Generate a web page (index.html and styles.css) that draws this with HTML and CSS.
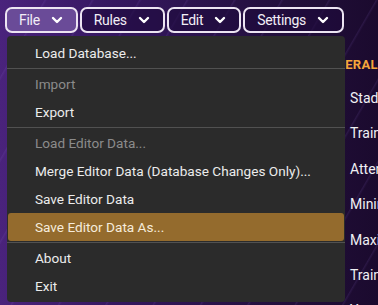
FILE: index.html
```html
<!DOCTYPE html>
<html lang="en">
<head>
    <meta charset="UTF-8">
    <meta name="viewport" content="width=device-width, initial-scale=1.0">
    <title>Editor</title>
    <link rel="stylesheet" href="styles.css">
</head>
<body>

    <div class="page">
        <!-- Barra de menus -->
        <div class="topbar">
            <button class="menu-btn active">File <svg class="chev" viewBox="0 0 10 6"><polyline points="1,1 5,5 9,1"/></svg></button>
            <button class="menu-btn">Rules <svg class="chev" viewBox="0 0 10 6"><polyline points="1,1 5,5 9,1"/></svg></button>
            <button class="menu-btn">Edit <svg class="chev" viewBox="0 0 10 6"><polyline points="1,1 5,5 9,1"/></svg></button>
            <button class="menu-btn">Settings <svg class="chev" viewBox="0 0 10 6"><polyline points="1,1 5,5 9,1"/></svg></button>
        </div>

        <!-- Panel detras del menu -->
        <div class="panel">
            <div class="panel-title">GENERAL</div>
            <div class="panel-row">Stadium Capacity</div>
            <div class="panel-row">Training Facilities</div>
            <div class="panel-row">Attendance</div>
            <div class="panel-row">Minimum Wage</div>
            <div class="panel-row">Maximum Wage</div>
            <div class="panel-row">Training Budget</div>
            <div class="panel-row">Youth Facilities</div>
        </div>

        <!-- Desplegable File -->
        <div class="dropdown">
            <div class="item">Load Database...</div>
            <div class="sep"></div>
            <div class="item disabled">Import</div>
            <div class="item">Export</div>
            <div class="sep"></div>
            <div class="item disabled">Load Editor Data...</div>
            <div class="item">Merge Editor Data (Database Changes Only)...</div>
            <div class="item">Save Editor Data</div>
            <div class="item hover">Save Editor Data As...</div>
            <div class="sep"></div>
            <div class="item">About</div>
            <div class="item">Exit</div>
        </div>
    </div>

</body>
</html>
```

FILE: styles.css
```css
body {
    margin: 0;
    font-family: Roboto, "Noto Sans", sans-serif;
    color: #ececec;
}

.page {
    position: relative;
    width: 378px;
    height: 305px;
    overflow: hidden;
    background:
        repeating-linear-gradient(120deg, rgba(255,255,255,0) 0px, rgba(255,255,255,0) 38px, rgba(150,110,220,0.12) 39px, rgba(255,255,255,0) 41px),
        linear-gradient(90deg, #4a237c 0%, #351760 30%, #24103f 70%, #1b0a2e 100%);
}

.topbar {
    display: flex;
    gap: 2px;
    padding: 7px 0 0 5px;
}

.menu-btn {
    display: flex;
    align-items: center;
    gap: 12px;
    box-sizing: border-box;
    height: 26px;
    margin: 0;
    padding: 0 14px 0 12px;
    border: 2px solid #ece4f2;
    border-radius: 7px;
    background: rgba(30, 10, 60, 0.6);
    color: #f2eef6;
    font-family: Roboto, "Noto Sans", sans-serif;
    font-size: 14px;
    letter-spacing: -0.3px;
}

.menu-btn.active {
    background: #6a4b98;
}

.chev {
    flex: none;
    width: 10px;
    height: 6px;
    fill: none;
    stroke: #ffffff;
    stroke-width: 2.4;
    stroke-linecap: round;
    stroke-linejoin: round;
    overflow: visible;
}

.panel {
    margin: 23px 0 0 319px;
    white-space: nowrap;
    font-size: 14px;
}

.panel-title {
    height: 18px;
    line-height: 18px;
    margin-bottom: 7px;
    font-size: 13px;
    font-weight: bold;
    color: #f5a53b;
    letter-spacing: 0.3px;
}

.panel-row {
    height: 35.4px;
    line-height: 35px;
    padding-left: 31px;
    color: #f0f0f4;
}

.dropdown {
    position: absolute;
    left: 7px;
    top: 36px;
    width: 338px;
    height: 266px;
    box-sizing: border-box;
    padding: 3px 1px 2px 1px;
    background: #2b2b2b;
    border-radius: 4px;
}

.item {
    height: 28px;
    line-height: 28px;
    padding-left: 27px;
    font-size: 13.6px;
    color: #ececec;
    border-radius: 3px;
}

.item.disabled {
    color: #8b8b8b;
}

.item.hover {
    background: #946b2d;
    color: #f6ecdc;
}

.sep {
    height: 1px;
    margin: 1px -1px;
    background: #515151;
}
```
